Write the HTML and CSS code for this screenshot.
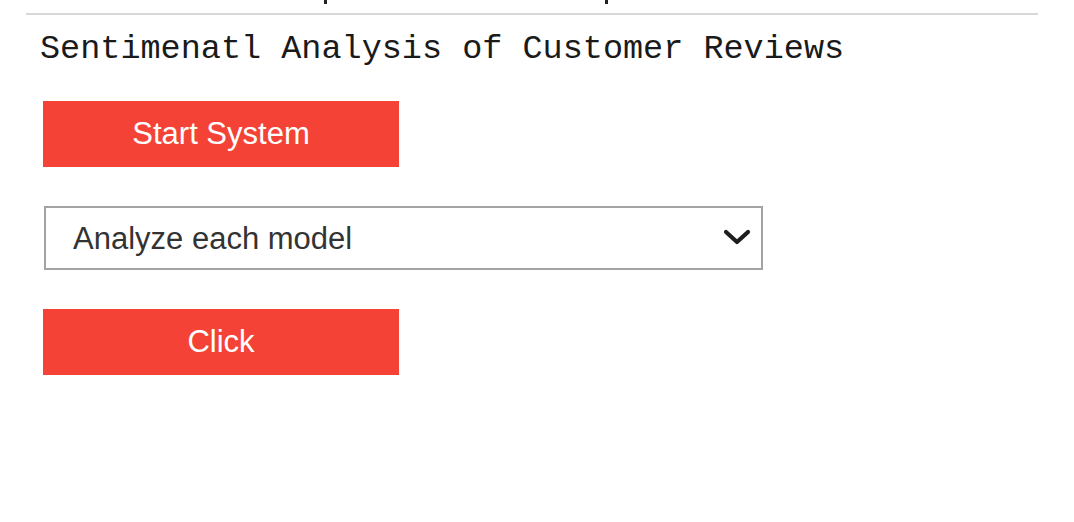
FILE: index.html
```html
<!DOCTYPE html>
<html>
<head>
<meta charset="utf-8">
<link rel="stylesheet" href="styles.css">
</head>
<body>
<div class="topcut">
  <span class="mark"></span>
  <span class="mark"></span>
</div>
<hr class="rule">
<main class="panel">
  <h1 class="title">Sentimenatl Analysis of Customer Reviews</h1>
  <button class="btn">Start System</button>
  <div class="select-wrap">
    <select class="select">
      <option>Analyze each model</option>
    </select>
    <svg class="chev" width="30" height="20" viewBox="0 0 30 20">
      <path d="M4 4 L15 14 L26 4" fill="none" stroke="#1e1e1e" stroke-width="4.2" stroke-linecap="round" stroke-linejoin="round"/>
    </svg>
  </div>
  <button class="btn">Click</button>
</main>
</body>
</html>
```
FILE: styles.css
```css
html, body {
  margin: 0;
  padding: 0;
  background: #ffffff;
}
.topcut {
  display: flex;
  height: 4px;
  padding-left: 324px;
  gap: 278px;
}
.mark {
  display: block;
  width: 3px;
  height: 4px;
  background: #222;
}
.rule {
  margin: 9px 0 0 26px;
  width: 1012px;
  height: 2px;
  border: none;
  background: #d8d8d8;
}
.panel {
  display: flex;
  flex-direction: column;
  align-items: flex-start;
  padding-left: 40px;
}
.title {
  margin: 15px 0 0 0;
  font-family: "Liberation Mono", "DejaVu Sans Mono", monospace;
  font-weight: normal;
  font-size: 33.5px;
  line-height: 38px;
  color: #1a1a1a;
  letter-spacing: 0;
}
.btn {
  margin: 33px 0 0 3px;
  width: 356px;
  height: 66px;
  border: none;
  background: #f44336;
  color: #ffffff;
  font-family: "Liberation Sans", Arial, sans-serif;
  font-size: 31px;
  padding: 0;
  cursor: pointer;
}
.select-wrap {
  position: relative;
  margin: 39px 0 39px 4px;
  width: 719px;
  height: 64px;
}
.select {
  appearance: none;
  -webkit-appearance: none;
  width: 719px;
  height: 64px;
  border: 2px solid #a3a3a3;
  border-radius: 0;
  background: #ffffff;
  color: #333333;
  font-family: "Liberation Sans", Arial, sans-serif;
  font-size: 31px;
  padding: 0 0 0 27px;
  margin: 0;
  outline: none;
}
.select-wrap + .btn {
  margin-top: 0;
}
.chev {
  position: absolute;
  left: 678px;
  top: 22px;
  pointer-events: none;
}
```
